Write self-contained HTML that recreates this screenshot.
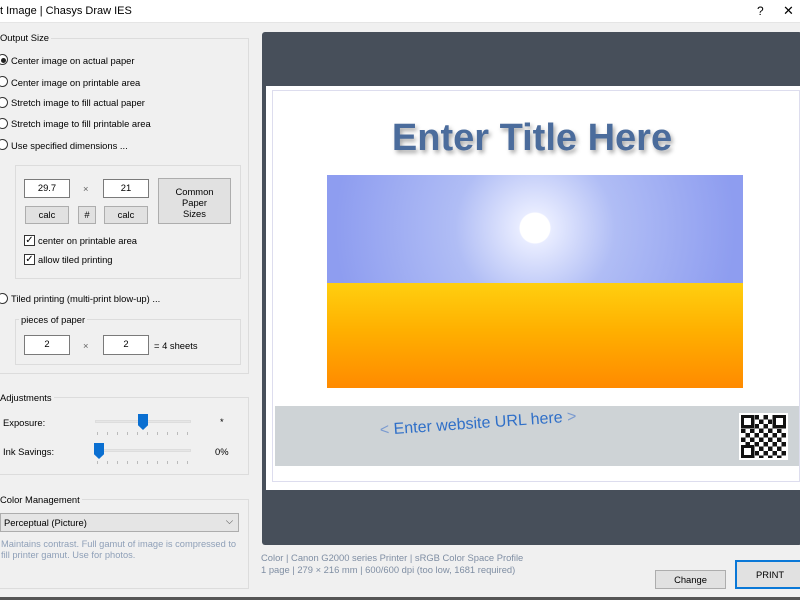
<!DOCTYPE html>
<html><head><style>
*{box-sizing:border-box;margin:0;padding:0}
body{width:800px;height:600px;overflow:hidden;background:#f0f0f0;font-family:"Liberation Sans",sans-serif;font-size:9.4px;color:#000;position:relative}
.a{position:absolute;white-space:nowrap}
.grp{position:absolute;border:1px solid #dcdcdc}
.lbl{position:absolute;background:#f0f0f0;padding:0 2px}
.rad{position:absolute;width:11px;height:11px;border:1px solid #333;border-radius:50%;background:#fff}
.inp{position:absolute;background:#fff;border:1px solid #7a7a7a;text-align:center;line-height:16px}
.btn{position:absolute;background:#e1e1e1;border:1px solid #adadad;text-align:center}
.chk{position:absolute;width:11px;height:11px;border:1px solid #333;background:#fff;font-size:10px;line-height:9px;text-align:center}
.track{position:absolute;height:3px;background:#e6e6e6;border:1px solid #ddd}
.ticks{position:absolute;height:3px;background:repeating-linear-gradient(90deg,#bbb 0 1px,transparent 1px 10px)}
</style></head><body>
<div class="a" style="left:0;top:0;width:800px;height:23px;background:#fff;border-bottom:1px solid #e5e5e5"></div>
<div class="a" style="left:0;top:5px;font-size:11px">t Image | Chasys Draw IES</div>
<div class="a" style="left:757px;top:4px;font-size:12px">?</div>
<div class="a" style="left:783px;top:3px;font-size:13px">✕</div>

<div class="grp" style="left:-2px;top:38px;width:251px;height:336px"></div>
<div class="lbl a" style="left:-2px;top:32px">Output Size</div>
<div class="rad" style="left:-3px;top:54px"><div style="position:absolute;left:3px;top:3px;width:5px;height:5px;border-radius:50%;background:#222"></div></div>
<div class="a" style="left:11px;top:55px">Center image on actual paper</div>
<div class="rad" style="left:-3px;top:76px"></div><div class="a" style="left:11px;top:77px">Center image on printable area</div>
<div class="rad" style="left:-3px;top:97px"></div><div class="a" style="left:11px;top:97px">Stretch image to fill actual paper</div>
<div class="rad" style="left:-3px;top:118px"></div><div class="a" style="left:11px;top:118px">Stretch image to fill printable area</div>
<div class="rad" style="left:-3px;top:139px"></div><div class="a" style="left:11px;top:140px">Use specified dimensions ...</div>
<div class="grp" style="left:15px;top:165px;width:226px;height:114px"></div>
<div class="inp" style="left:24px;top:179px;width:46px;height:19px">29.7</div>
<div class="a" style="left:83px;top:183px;color:#666">×</div>
<div class="inp" style="left:103px;top:179px;width:46px;height:19px">21</div>
<div class="btn" style="left:158px;top:178px;width:73px;height:46px;padding-top:7px;line-height:11px">Common<br>Paper<br>Sizes</div>
<div class="btn" style="left:25px;top:206px;width:44px;height:18px;line-height:16px">calc</div>
<div class="btn" style="left:78px;top:206px;width:18px;height:18px;line-height:16px">#</div>
<div class="btn" style="left:104px;top:206px;width:44px;height:18px;line-height:16px">calc</div>
<div class="chk" style="left:24px;top:235px">✓</div><div class="a" style="left:38px;top:235px">center on printable area</div>
<div class="chk" style="left:24px;top:254px">✓</div><div class="a" style="left:38px;top:254px">allow tiled printing</div>
<div class="rad" style="left:-3px;top:293px"></div><div class="a" style="left:11px;top:293px">Tiled printing (multi-print blow-up) ...</div>
<div class="grp" style="left:15px;top:319px;width:226px;height:46px"></div>
<div class="lbl a" style="left:19px;top:314px">pieces of paper</div>
<div class="inp" style="left:24px;top:335px;width:46px;height:20px">2</div>
<div class="a" style="left:83px;top:340px;color:#666">×</div>
<div class="inp" style="left:103px;top:335px;width:46px;height:20px">2</div>
<div class="a" style="left:154px;top:340px">= 4 sheets</div>

<div class="grp" style="left:-2px;top:397px;width:251px;height:78px"></div>
<div class="lbl a" style="left:-2px;top:392px">Adjustments</div>
<div class="a" style="left:3px;top:417px">Exposure:</div>
<div class="track" style="left:95px;top:420px;width:96px"></div>
<div class="ticks" style="left:97px;top:432px;width:94px"></div>
<div class="a" style="left:138px;top:414px;width:10px;height:16px;background:#0a6fd1;clip-path:polygon(0 0,100% 0,100% 70%,50% 100%,0 70%)"></div>
<div class="a" style="left:220px;top:416px">*</div>
<div class="a" style="left:3px;top:446px">Ink Savings:</div>
<div class="track" style="left:95px;top:449px;width:96px"></div>
<div class="ticks" style="left:97px;top:461px;width:94px"></div>
<div class="a" style="left:94px;top:443px;width:10px;height:16px;background:#0a6fd1;clip-path:polygon(0 0,100% 0,100% 70%,50% 100%,0 70%)"></div>
<div class="a" style="left:215px;top:446px">0%</div>

<div class="grp" style="left:-2px;top:499px;width:251px;height:90px"></div>
<div class="lbl a" style="left:-2px;top:494px">Color Management</div>
<div class="a" style="left:0;top:513px;width:239px;height:19px;background:#e5e5e5;border:1px solid #adadad;padding:3px 3px">Perceptual (Picture)<span style="position:absolute;right:5px;top:1px;color:#555">⌵</span></div>
<div class="a" style="left:1px;top:539px;color:#8fa0b8;line-height:11px;font-size:9.3px">Maintains contrast. Full gamut of image is compressed to<br>fill printer gamut. Use for photos.</div>

<div class="a" style="left:262px;top:32px;width:540px;height:513px;background:#474f5a;border-radius:3px"></div>
<div class="a" style="left:266px;top:86px;width:534px;height:404px;background:#fff"></div>
<div class="a" style="left:272px;top:90px;width:528px;height:392px;border:1px solid #dde"></div>
<div class="a" style="left:292px;top:117px;width:480px;text-align:center;font-size:38px;font-weight:bold;color:#4b6c9c;text-shadow:2px 3px 4px #aaa">Enter Title Here</div>
<div class="a" style="left:327px;top:175px;width:416px;height:108px;background:radial-gradient(circle at 208px 53px,#fff 0 15px,#e8ecff 16px,#b0bdf5 80px,#8e9df0 200px)"></div>
<div class="a" style="left:327px;top:283px;width:416px;height:105px;background:linear-gradient(#ffcf10,#ffb000 45%,#ff8a00)"></div>
<div class="a" style="left:275px;top:406px;width:524px;height:60px;background:#ced3d6"></div>
<div class="a" style="left:380px;top:422px;font-size:16px;color:#2f6fc8;transform:rotate(-4deg);transform-origin:left"><span style="color:#7a9ad0">&lt;</span> Enter website URL here <span style="color:#7a9ad0">&gt;</span></div>
<div class="a" style="left:739px;top:413px;width:49px;height:47px;background:#fff;padding:2px"><div style="width:100%;height:100%;background:repeating-conic-gradient(#111 0 25%,#fff 0 50%) 0 0/9px 9px"></div>
<div style="position:absolute;left:2px;top:2px;width:13px;height:13px;border:3px solid #111;background:#fff"></div>
<div style="position:absolute;right:2px;top:2px;width:13px;height:13px;border:3px solid #111;background:#fff"></div>
<div style="position:absolute;left:2px;bottom:2px;width:13px;height:13px;border:3px solid #111;background:#fff"></div></div>

<div class="a" style="left:261px;top:552px;color:#7f8ea3;line-height:12px">Color | Canon G2000 series Printer | sRGB Color Space Profile<br>1 page | 279 × 216 mm | 600/600 dpi (too low, 1681 required)</div>
<div class="btn" style="left:655px;top:570px;width:71px;height:19px;line-height:17px">Change</div>
<div class="btn" style="left:735px;top:560px;width:70px;height:29px;line-height:25px;border:2px solid #0a78d7">PRINT</div>
<div class="a" style="left:0;top:597px;width:800px;height:3px;background:#555"></div>
</body></html>
